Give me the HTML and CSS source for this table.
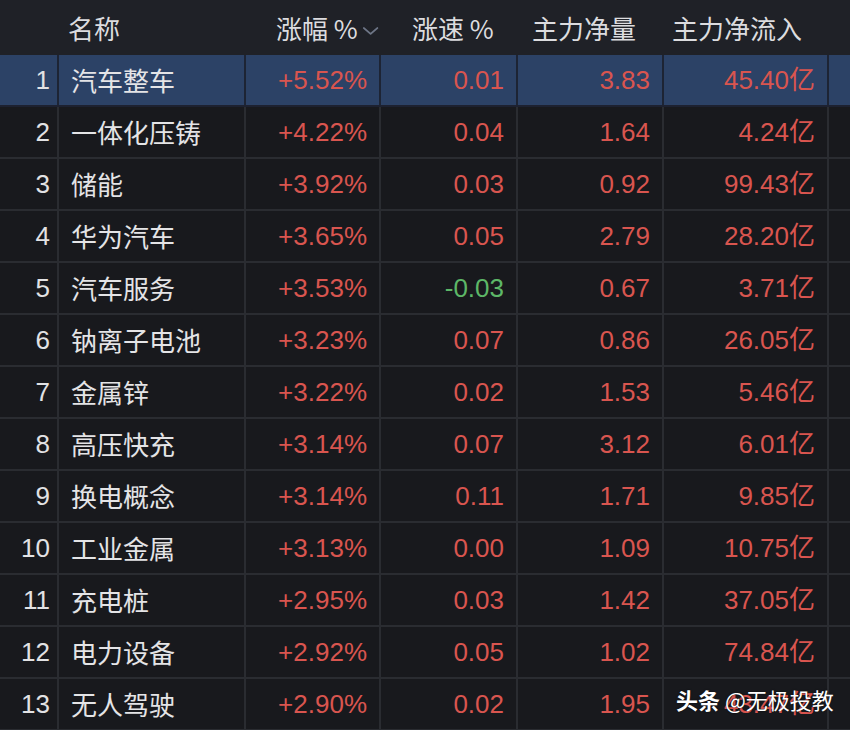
FILE: index.html
```html
<!DOCTYPE html>
<html lang="zh">
<head>
<meta charset="utf-8">
<title>板块排行</title>
<link rel="stylesheet" href="styles.css">
</head>
<body>
<div class="board">
  <div class="head">
    <div class="h h-idx"></div>
    <div class="h h-name">名称</div>
    <div class="h h-chg">涨幅 %<svg class="chev" width="18" height="10" viewBox="0 0 18 10"><path d="M2 2 L9 8 L16 2" fill="none" stroke="#6e7687" stroke-width="2" stroke-linecap="round" stroke-linejoin="round"/></svg></div>
    <div class="h h-spd">涨速 %</div>
    <div class="h h-vol">主力净量</div>
    <div class="h h-in">主力净流入</div>
    <div class="h"></div>
  </div>

  <div class="row sel"><div class="c idx">1</div><div class="c name">汽车整车</div><div class="c num up">+5.52%</div><div class="c num up">0.01</div><div class="c num up">3.83</div><div class="c num up">45.40亿</div><div class="c"></div></div>
  <div class="row"><div class="c idx">2</div><div class="c name">一体化压铸</div><div class="c num up">+4.22%</div><div class="c num up">0.04</div><div class="c num up">1.64</div><div class="c num up">4.24亿</div><div class="c"></div></div>
  <div class="row"><div class="c idx">3</div><div class="c name">储能</div><div class="c num up">+3.92%</div><div class="c num up">0.03</div><div class="c num up">0.92</div><div class="c num up">99.43亿</div><div class="c"></div></div>
  <div class="row"><div class="c idx">4</div><div class="c name">华为汽车</div><div class="c num up">+3.65%</div><div class="c num up">0.05</div><div class="c num up">2.79</div><div class="c num up">28.20亿</div><div class="c"></div></div>
  <div class="row"><div class="c idx">5</div><div class="c name">汽车服务</div><div class="c num up">+3.53%</div><div class="c num down">-0.03</div><div class="c num up">0.67</div><div class="c num up">3.71亿</div><div class="c"></div></div>
  <div class="row"><div class="c idx">6</div><div class="c name">钠离子电池</div><div class="c num up">+3.23%</div><div class="c num up">0.07</div><div class="c num up">0.86</div><div class="c num up">26.05亿</div><div class="c"></div></div>
  <div class="row"><div class="c idx">7</div><div class="c name">金属锌</div><div class="c num up">+3.22%</div><div class="c num up">0.02</div><div class="c num up">1.53</div><div class="c num up">5.46亿</div><div class="c"></div></div>
  <div class="row"><div class="c idx">8</div><div class="c name">高压快充</div><div class="c num up">+3.14%</div><div class="c num up">0.07</div><div class="c num up">3.12</div><div class="c num up">6.01亿</div><div class="c"></div></div>
  <div class="row"><div class="c idx">9</div><div class="c name">换电概念</div><div class="c num up">+3.14%</div><div class="c num up">0.11</div><div class="c num up">1.71</div><div class="c num up">9.85亿</div><div class="c"></div></div>
  <div class="row"><div class="c idx">10</div><div class="c name">工业金属</div><div class="c num up">+3.13%</div><div class="c num up">0.00</div><div class="c num up">1.09</div><div class="c num up">10.75亿</div><div class="c"></div></div>
  <div class="row"><div class="c idx">11</div><div class="c name">充电桩</div><div class="c num up">+2.95%</div><div class="c num up">0.03</div><div class="c num up">1.42</div><div class="c num up">37.05亿</div><div class="c"></div></div>
  <div class="row"><div class="c idx">12</div><div class="c name">电力设备</div><div class="c num up">+2.92%</div><div class="c num up">0.05</div><div class="c num up">1.02</div><div class="c num up">74.84亿</div><div class="c"></div></div>
  <div class="row"><div class="c idx">13</div><div class="c name">无人驾驶</div><div class="c num up">+2.90%</div><div class="c num up">0.02</div><div class="c num up">1.95</div><div class="c num up">43.47亿</div><div class="c"></div></div>

  <div class="mark"><b>头条</b> @无极投教</div>
</div>
</body>
</html>
```

FILE: styles.css
```css
* { box-sizing: border-box; }
html, body {
  margin: 0;
  padding: 0;
  background: #18191d;
  width: 850px;
  height: 730px;
  overflow: hidden;
}
.board {
  position: relative;
  width: 850px;
  height: 730px;
  font-family: "Liberation Sans", "Noto Sans CJK SC", sans-serif;
  font-size: 26px;
  color: #e2e2e4;
  background: #18191d;
}
.head, .row {
  display: grid;
  grid-template-columns: 57px 185px 133px 135px 144px 163px 1fr;
  column-gap: 2px;
}
.head {
  height: 55px;
  background: #1f2127;
  align-items: center;
}
.h {
  font-family: "Noto Sans CJK SC", sans-serif;
  color: #dcdcdf;
  white-space: nowrap;
  line-height: 1;
  display: flex;
  align-items: center;
}
.h-name { padding-left: 9px; }
.h-chg { padding-left: 30px; }
.h-spd { padding-left: 31px; }
.h-vol { padding-left: 14px; }
.h-in { padding-left: 8px; }
.chev { margin-left: 4px; margin-top: 6px; }

.row {
  height: 52px;
  background: #2a2c31;
  border-bottom: 2px solid #2a2c31;
}
.row .c {
  background: #18191d;
  display: flex;
  align-items: center;
  white-space: nowrap;
  line-height: 1;
}
.row.sel { background: #1d2434; border-bottom-color: #1d2130; }
.row.sel .c { background: #2c4266; }
.idx {
  justify-content: flex-end;
  padding-right: 7px;
  color: #e2e2e4;
}
.name {
  font-family: "Noto Sans CJK SC", sans-serif;
  padding-left: 12px;
  color: #e4e4e6;
}
.num {
  justify-content: flex-end;
  padding-right: 12px;
}
.up { color: #d9554f; }
.down { color: #5db767; }

.mark {
  position: absolute;
  left: 676px;
  top: 684px;
  font-family: "Noto Sans CJK SC", sans-serif;
  font-size: 22px;
  color: #ffffff;
  line-height: 30px;
  white-space: nowrap;
  text-shadow: 0 0 2px rgba(0,0,0,0.6);
}
.mark b { font-weight: 700; }
```
